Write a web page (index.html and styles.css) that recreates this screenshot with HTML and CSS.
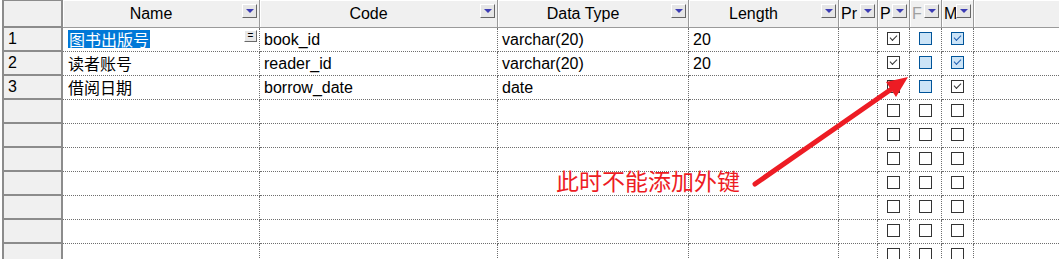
FILE: index.html
```html
<!DOCTYPE html>
<html lang="zh">
  <head>
    <meta charset="UTF-8" />
    <title>Columns</title>
    <link rel="stylesheet" href="styles.css">
  </head>
  <body>
    <div class="grid">
      <div class="row head">
        <div class="num"></div>
        <div>Name<span class="drop"></span></div>
        <div>Code<span class="drop"></span></div>
        <div>Data Type<span class="drop"></span></div>
        <div>Length<span class="drop"></span></div>
        <div class="narrow">Pr<span class="drop"></span></div>
        <div class="narrow">P<span class="drop"></span></div>
        <div class="narrow off">F<span class="drop"></span></div>
        <div class="narrow">M<span class="drop"></span></div>
        <div class="last"></div>
      </div>

      <div class="row">
        <div class="num">1</div>
        <div class="name"><span class="sel">图书出版号</span><span class="more">=</span></div>
        <div>book_id</div>
        <div>varchar(20)</div>
        <div>20</div>
        <div></div>
        <div class="ck"><span class="box on"></span></div>
        <div class="ck"><span class="box blue"></span></div>
        <div class="ck"><span class="box blue on"></span></div>
        <div class="last"></div>
      </div>
      <div class="row">
        <div class="num">2</div>
        <div class="name">读者账号</div>
        <div>reader_id</div>
        <div>varchar(20)</div>
        <div>20</div>
        <div></div>
        <div class="ck"><span class="box on"></span></div>
        <div class="ck"><span class="box blue"></span></div>
        <div class="ck"><span class="box blue on"></span></div>
        <div class="last"></div>
      </div>
      <div class="row">
        <div class="num">3</div>
        <div class="name">借阅日期</div>
        <div>borrow_date</div>
        <div>date</div>
        <div></div>
        <div></div>
        <div class="ck"><span class="box on"></span></div>
        <div class="ck"><span class="box blue"></span></div>
        <div class="ck"><span class="box on"></span></div>
        <div class="last"></div>
      </div>

      <div class="row"><div class="num"></div><div></div><div></div><div></div><div></div><div></div><div class="ck"><span class="box"></span></div><div class="ck"><span class="box"></span></div><div class="ck"><span class="box"></span></div><div class="last"></div></div>
      <div class="row"><div class="num"></div><div></div><div></div><div></div><div></div><div></div><div class="ck"><span class="box"></span></div><div class="ck"><span class="box"></span></div><div class="ck"><span class="box"></span></div><div class="last"></div></div>
      <div class="row"><div class="num"></div><div></div><div></div><div></div><div></div><div></div><div class="ck"><span class="box"></span></div><div class="ck"><span class="box"></span></div><div class="ck"><span class="box"></span></div><div class="last"></div></div>
      <div class="row"><div class="num"></div><div></div><div></div><div></div><div></div><div></div><div class="ck"><span class="box"></span></div><div class="ck"><span class="box"></span></div><div class="ck"><span class="box"></span></div><div class="last"></div></div>
      <div class="row"><div class="num"></div><div></div><div></div><div></div><div></div><div></div><div class="ck"><span class="box"></span></div><div class="ck"><span class="box"></span></div><div class="ck"><span class="box"></span></div><div class="last"></div></div>
      <div class="row"><div class="num"></div><div></div><div></div><div></div><div></div><div></div><div class="ck"><span class="box"></span></div><div class="ck"><span class="box"></span></div><div class="ck"><span class="box"></span></div><div class="last"></div></div>
      <div class="row"><div class="num"></div><div></div><div></div><div></div><div></div><div></div><div class="ck"><span class="box"></span></div><div class="ck"><span class="box"></span></div><div class="ck"><span class="box"></span></div><div class="last"></div></div>
    </div>

    <!-- annotation drawn on top of the grid -->
    <svg class="arrow" width="1059" height="259" viewBox="0 0 1059 259">
      <line x1="755" y1="184" x2="893" y2="88" stroke="#ed1c24" stroke-width="5" stroke-linecap="round" />
      <polygon points="908,77 886,82 896,97" fill="#ed1c24" />
    </svg>
    <div class="note">此时不能添加外键</div>
  </body>
</html>
```

FILE: styles.css
```css
body {
  margin: 0;
  background: #fff;
  color: #000;
  font-family: "Liberation Sans", "Noto Sans CJK SC", sans-serif;
  font-size: 16px;
  height: 259px;
  overflow: hidden;
  position: relative;
}
.grid {
  padding-left: 2px;
}
.row {
  display: grid;
  grid-template-columns: 61px 197px 238px 191px 150px 39px 32px 32px 32px 85px;
  height: 24px;
}
.row > div {
  position: relative;
  border-right: 1px dotted #6e6e6e;
  border-bottom: 1px dotted #6e6e6e;
  padding-left: 4px;
  line-height: 23px;
  white-space: nowrap;
  overflow: hidden;
}
.row > .last {
  border-right: none;
}
.row > .num {
  background: #f0f0f0;
  border-left: 2px solid #8c8c8c;
  border-right: 2px solid #8c8c8c;
  border-bottom: 2px solid #8c8c8c;
  padding-left: 4px;
  line-height: 22px;
}
.row > .name {
  padding-left: 5px;
  font-family: "Noto Sans CJK SC", sans-serif;
  font-size: 16px;
}
.sel {
  background: #0078d7;
  color: #fff;
  padding: 0 1px;
  line-height: 18px;
  display: inline-block;
}
.more {
  position: absolute;
  right: 2px;
  top: 2px;
  width: 11px;
  height: 10px;
  background: #e8e8e8;
  border: 1px solid;
  border-color: #fff #6a6a6a #6a6a6a #fff;
  font-family: "Liberation Sans", sans-serif;
  font-size: 10px;
  line-height: 9px;
  text-align: center;
  color: #000;
}

/* header */
.head {
  height: 28px;
}
.head > div {
  background: #f0f0f0;
  border-right: 1px solid #9a9a9a;
  border-bottom: 1px solid #9a9a9a;
  box-shadow: inset 1px 1px #fff;
  line-height: 28px;
  text-align: center;
  padding: 0 20px 0 0;
}
.head > .num {
  border-top: 1px solid #8c8c8c;
  border-right: 2px solid #8c8c8c;
  border-bottom: 2px solid #8c8c8c;
  box-shadow: none;
  line-height: 24px;
  padding: 0;
}
.head > .narrow {
  text-align: left;
  padding: 0 0 0 2px;
}
.head > .off {
  color: #a0a0a0;
}
.head > .last {
  border-right: none;
  padding: 0;
}
.drop {
  position: absolute;
  right: 2px;
  top: 4px;
  width: 13px;
  height: 12px;
  background: #e6e6e6;
  border: 1px solid;
  border-color: #fff #666 #666 #fff;
}
.drop::after {
  content: "";
  position: absolute;
  left: 3px;
  top: 4px;
  border-left: 4px solid transparent;
  border-right: 4px solid transparent;
  border-top: 4px solid #3c3cb4;
}

/* checkbox cells */
.row > .ck {
  padding: 0;
  display: flex;
  justify-content: center;
  align-items: center;
}
.box {
  width: 11px;
  height: 11px;
  border: 1px solid #333;
  background: #fff;
  margin-top: -2px;
  position: relative;
}
.box.blue {
  background: #cce4f7;
  border-color: #005499;
}
.box.on::after {
  content: "";
  position: absolute;
  left: 2px;
  top: 2px;
  width: 6px;
  height: 3px;
  border-left: 1px solid #333;
  border-bottom: 1px solid #333;
  transform: rotate(-45deg);
}
.box.blue.on::after {
  border-color: #1f5fb0;
}

/* annotation */
.arrow {
  position: absolute;
  left: 0;
  top: 0;
}
.note {
  position: absolute;
  left: 556px;
  top: 167px;
  color: #ed1c24;
  font-family: "Noto Sans CJK SC", sans-serif;
  font-size: 23px;
  line-height: 26px;
}
```
